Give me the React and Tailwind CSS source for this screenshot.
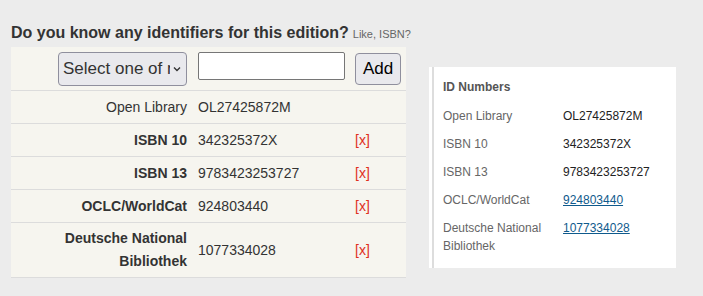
export default function App() {
  const rows = [
    { label: "ISBN 10", value: "342325372X" },
    { label: "ISBN 13", value: "9783423253727" },
    { label: "OCLC/WorldCat", value: "924803440" },
  ];
  const side = [
    { label: "Open Library", value: "OL27425872M" },
    { label: "ISBN 10", value: "342325372X" },
    { label: "ISBN 13", value: "9783423253727" },
    { label: "OCLC/WorldCat", value: "924803440", link: true },
    { label: "Deutsche National Bibliothek", value: "1077334028", link: true },
  ];
  return (
    <div
      className="w-[703px] h-[296px] bg-[#ececec] flex items-start overflow-hidden text-[#333]"
      style={{ fontFamily: '"Liberation Sans", Arial, sans-serif' }}
    >
      <div className="ml-[11px] mt-[23px] w-[395px] flex flex-col">
        <div className="flex items-baseline leading-[20px] mb-[3px] whitespace-nowrap">
          <span className="text-[16px] font-bold text-[#333]">
            Do you know any identifiers for this edition?
          </span>
          <span className="text-[11px] text-[#666] ml-[4px]">Like, ISBN?</span>
        </div>
        <div className="bg-[#f6f5ef] flex flex-col text-[14px]">
          <div className="flex items-start h-[44px] border-b border-[#dcdcdc]">
            <div className="w-[181px] pr-[5px] flex justify-end pt-[5px]">
              <div className="w-[129px] h-[34px] rounded-[4px] border border-[#8f8f9d] bg-[#e9e9ed] flex items-center pl-[4px] pr-[4px] text-[17px] text-[#333] overflow-hidden">
                <span className="whitespace-nowrap overflow-hidden flex-1">Select one of many</span>
                <svg width="10" height="10" viewBox="0 0 10 10" className="ml-[2px] shrink-0">
                  <path d="M2 3.5 L5 6.5 L8 3.5" fill="none" stroke="#333" strokeWidth="1.4" />
                </svg>
              </div>
            </div>
            <div className="w-[158px] pl-[6px] pt-[5px]">
              <div className="w-[147px] h-[28px] bg-white border border-[#767676] rounded-[2px]" />
            </div>
            <div className="pl-[5px] pt-[6px]">
              <div className="w-[46px] h-[32px] rounded-[4px] border border-[#8f8f9d] bg-[#e9e9ed] flex items-center justify-center text-[17px] text-black">
                Add
              </div>
            </div>
          </div>
          <div className="flex items-center border-b border-[#dcdcdc] py-[5px] leading-[22px]">
            <div className="w-[181px] pr-[5px] text-right">Open Library</div>
            <div className="w-[158px] pl-[6px]">OL27425872M</div>
          </div>
          {rows.map((r) => (
            <div key={r.label} className="flex items-center border-b border-[#dcdcdc] py-[5px] leading-[22px]">
              <div className="w-[181px] pr-[5px] text-right font-bold">{r.label}</div>
              <div className="w-[158px] pl-[6px]">{r.value}</div>
              <div className="pl-[5px] text-[#e0301e]">[x]</div>
            </div>
          ))}
          <div className="flex items-center border-b border-[#dcdcdc] py-[4px] leading-[23px]">
            <div className="w-[181px] pr-[5px] text-right font-bold">
              Deutsche National
              <br />
              Bibliothek
            </div>
            <div className="w-[158px] pl-[6px]">1077334028</div>
            <div className="pl-[5px] text-[#e0301e]">[x]</div>
          </div>
        </div>
      </div>
      <div className="ml-[23px] mt-[67px] w-[247px] h-[201px] bg-white pl-[3px] flex">
        <div className="flex-1 border-l-2 border-[#dddddd] pl-[9px] pt-[11px] text-[12px]">
          <div className="font-bold text-[#555] leading-[18px] mb-[11px]">ID Numbers</div>
          <div className="flex flex-col gap-[10px]">
            {side.map((s) => (
              <div key={s.label} className="flex leading-[18px]">
                <div className="w-[120px] pr-[10px] text-[#666]">{s.label}</div>
                <div>
                  {s.link ? (
                    <span className="text-[#0f5a8c] underline">{s.value}</span>
                  ) : (
                    <span className="text-[#222]">{s.value}</span>
                  )}
                </div>
              </div>
            ))}
          </div>
        </div>
      </div>
    </div>
  );
}
